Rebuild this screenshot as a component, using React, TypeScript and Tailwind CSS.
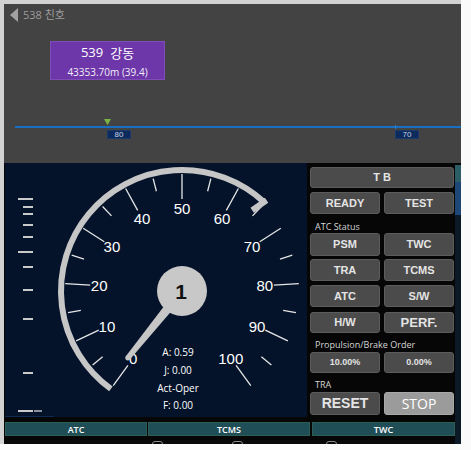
import React from "react";

const CX = 182;
const CY = 291;
const pt = (deg: number, r: number): [number, number] => {
  const a = (deg * Math.PI) / 180;
  return [CX + r * Math.sin(a), CY - r * Math.cos(a)];
};

const Gauge = () => {
  const ticks: React.ReactNode[] = [];
  const labels: React.ReactNode[] = [];
  for (let v = 0; v <= 100; v += 5) {
    const deg = -144 + v * 2.88;
    const major = v % 10 === 0;
    const [x1, y1] = pt(deg, major ? 92 : 103);
    const [x2, y2] = pt(deg, major ? 117 : 116);
    ticks.push(
      <line key={"t" + v} x1={x1} y1={y1} x2={x2} y2={y2} stroke="#e6e6e6" strokeWidth={1.3} />
    );
    if (major) {
      const [lx, ly] = pt(deg, 83);
      labels.push(
        <text
          key={"l" + v}
          x={lx}
          y={ly + 5.5}
          textAnchor="middle"
          fontSize={15}
          fill="#ffffff"
          fontFamily="'Liberation Sans', Arial, sans-serif"
        >
          {v}
        </text>
      );
    }
  }
  const [sx, sy] = pt(-144, 121);
  const [ex, ey] = pt(43, 121);
  const [h1x, h1y] = pt(43, 124);
  const [h2x, h2y] = pt(41, 107);

  const nd = (-141 * Math.PI) / 180;
  const dx = Math.sin(nd);
  const dy = -Math.cos(nd);
  const nx = -dy;
  const ny = dx;
  const L = 86;
  const needle = [
    [CX + nx * 5, CY + ny * 5],
    [CX + dx * L + nx * 2.6, CY + dy * L + ny * 2.6],
    [CX + dx * L - nx * 2.6, CY + dy * L - ny * 2.6],
    [CX - nx * 5, CY - ny * 5],
  ]
    .map((p) => p.join(","))
    .join(" ");

  const scale: [number, boolean][] = [
    [199, true],
    [207, false],
    [214, false],
    [225, false],
    [237, false],
    [252, true],
    [267, false],
    [290, false],
    [319, false],
    [373, false],
    [411, true],
  ];

  return (
    <svg width={302} height={254} viewBox="5 163 302 254" className="block">
      {scale.map(([y, long]) => (
        <line
          key={y}
          x1={long ? 18 : 23}
          x2={33}
          y1={y}
          y2={y}
          stroke="#c9c9c9"
          strokeWidth={2}
        />
      ))}
      <line x1={34} x2={42} y1={411} y2={411} stroke="#8a8f99" strokeWidth={2} />
      <line x1={5} x2={54} y1={416.5} y2={416.5} stroke="#0d2a55" strokeWidth={1} />
      {ticks}
      <path
        d={`M ${sx} ${sy} A 121 121 0 1 1 ${ex} ${ey}`}
        fill="none"
        stroke="#c6c6c6"
        strokeWidth={6}
      />
      <line x1={h1x} y1={h1y} x2={h2x} y2={h2y} stroke="#c6c6c6" strokeWidth={6} />
      {labels}
      <polygon points={needle} fill="#c6c6c6" />
      <circle cx={CX + dx * L} cy={CY + dy * L} r={2.6} fill="#c6c6c6" />
      <circle cx={CX} cy={CY} r={25} fill="#c8c8c8" />
      <text
        x={CX - 1}
        y={CY + 7.5}
        textAnchor="middle"
        fontSize={21}
        fontWeight={700}
        fill="#111"
        fontFamily="'Liberation Sans', Arial, sans-serif"
      >
        1
      </text>
      {[
        ["A: 0.59", 356],
        ["J: 0.00", 374],
        ["Act-Oper", 391.5],
        ["F: 0.00", 409],
      ].map(([t, y]) => (
        <text
          key={t as string}
          x={178}
          y={y as number}
          textAnchor="middle"
          fontSize={10}
          fill="#ffffff"
          fontFamily="'Open Sans', 'Noto Sans', sans-serif"
        >
          {t}
        </text>
      ))}
    </svg>
  );
};

const Btn = ({
  children,
  className = "",
}: {
  children: React.ReactNode;
  className?: string;
}) => (
  <div
    className={
      "flex items-center justify-center rounded-[3px] border border-[#5c5c5c] bg-[#4b4b4b] font-bold text-[#e4e4e4] font-['Liberation_Sans',Arial,sans-serif] " +
      className
    }
  >
    {children}
  </div>
);

const Label = ({ children, className = "" }: { children: React.ReactNode; className?: string }) => (
  <div
    className={
      "flex items-center pl-[5px] text-[9px] leading-none text-[#d6d6d6] font-['Open_Sans','Noto_Sans',sans-serif] " +
      className
    }
  >
    {children}
  </div>
);

export default function App() {
  return (
    <div className="w-[471px] h-[450px] bg-[#fafafa] overflow-hidden">
      <div className="w-[461px] h-[444px] border-l-4 border-t-4 border-[#d2d2d2] flex flex-col">
        {/* top panel */}
        <div className="h-[159px] bg-[#434343] flex flex-col">
          <div className="h-[20px] flex items-center pl-[6px] pt-[1px]">
            <svg width="8" height="14" viewBox="0 0 8 14">
              <polygon points="8,0 8,14 0,7" fill="#a2a2a2" />
            </svg>
            <span className="ml-[5px] text-[11px] leading-none text-[#9c9c9c] font-['Open_Sans','Noto_Sans_CJK_KR',sans-serif]">
              538 친호
            </span>
          </div>
          <div className="ml-[46px] mt-[17px] w-[115px] h-[39px] bg-[#6d37a9] border border-[#7f4cb8] flex flex-col items-center justify-center text-white font-['Open_Sans','Noto_Sans_CJK_KR',sans-serif]">
            <div className="flex gap-[7px] text-[13px] leading-none mt-[1px]">
              <span>539</span>
              <span className="font-['Noto_Sans_CJK_KR',sans-serif]">강동</span>
            </div>
            <div className="text-[10px] leading-none mt-[8px] text-[#f2eef8]">43353.70m (39.4)</div>
          </div>
          <div className="relative ml-[11px] mt-[38px] h-[22px] w-[446px]">
            <div className="absolute left-0 right-0 top-[8px] h-[2px] bg-[#1b6fc1]" />
            <svg className="absolute left-[89px] top-[1px]" width="7" height="6" viewBox="0 0 7 6">
              <polygon points="0,0 7,0 3.5,6" fill="#7cb443" />
            </svg>
            <div className="absolute left-[92px] top-[12px] w-[24px] h-[9px] bg-[#0c2a5c] border border-[#1a3a6a] flex items-center justify-center text-[8px] leading-none text-[#c9d3e6] font-['Liberation_Sans',Arial,sans-serif]">
              80
            </div>
            <div className="absolute left-[380px] top-[7px] w-[1px] h-[4px] bg-[#2a80d0]" />
            <div className="absolute left-[380px] top-[12px] w-[24px] h-[9px] bg-[#0c2a5c] border border-[#1a3a6a] flex items-center justify-center text-[8px] leading-none text-[#c9d3e6] font-['Liberation_Sans',Arial,sans-serif]">
              70
            </div>
          </div>
        </div>

        {/* lower section */}
        <div className="flex flex-1 bg-[#060606]">
          <div className="flex flex-col w-[451px]">
            <div className="flex h-[259px]">
              <div className="ml-[1px] w-[302px] h-[254px] bg-[#04132a]">
                <Gauge />
              </div>
              <div className="ml-[3px] w-[144px] pt-[4px] flex flex-col">
                <Btn className="h-[21px] text-[11px]">T B</Btn>
                <div className="grid grid-cols-2 gap-[4px] mt-[4px]">
                  <Btn className="h-[22px] text-[11px]">READY</Btn>
                  <Btn className="h-[22px] text-[11px]">TEST</Btn>
                </div>
                <Label className="h-[19px] pt-[5px]">ATC Status</Label>
                <div className="grid grid-cols-2 gap-x-[4px] gap-y-[3px]">
                  <Btn className="h-[23px] text-[11px]">PSM</Btn>
                  <Btn className="h-[23px] text-[11px]">TWC</Btn>
                  <Btn className="h-[22px] text-[11px]">TRA</Btn>
                  <Btn className="h-[22px] text-[11px]">TCMS</Btn>
                  <Btn className="h-[22px] text-[11px] mt-[1px]">ATC</Btn>
                  <Btn className="h-[22px] text-[11px] mt-[1px]">S/W</Btn>
                  <Btn className="h-[21px] text-[11px] mt-[2px]">H/W</Btn>
                  <Btn className="h-[21px] text-[13px] mt-[2px]">PERF.</Btn>
                </div>
                <Label className="h-[19px] pt-[3px]">Propulsion/Brake Order</Label>
                <div className="grid grid-cols-2 gap-[4px]">
                  <Btn className="h-[21px] text-[9px]">10.00%</Btn>
                  <Btn className="h-[21px] text-[9px]">0.00%</Btn>
                </div>
                <Label className="h-[19px] pt-[3px]">TRA</Label>
                <div className="grid grid-cols-2 gap-[4px]">
                  <Btn className="h-[23px] text-[14px]">RESET</Btn>
                  <div className="h-[23px] flex items-center justify-center rounded-[3px] border border-[#a8a8a8] bg-[#9b9b9b] text-[14px] text-white font-['Open_Sans','Noto_Sans',sans-serif]">
                    STOP
                  </div>
                </div>
              </div>
            </div>
            <div className="flex h-[14px] ml-[1px] text-[9px] text-white font-semibold font-['Open_Sans','Noto_Sans',sans-serif] leading-none">
              <div className="w-[142px] bg-[#1f4e57] border border-[#2b5e55] flex items-center justify-center">ATC</div>
              <div className="ml-[1px] w-[162px] bg-[#1f4e57] border border-[#2b5e55] flex items-center justify-center">TCMS</div>
              <div className="ml-[2px] w-[143px] bg-[#1f4e57] border border-[#2b5e55] flex items-center justify-center">TWC</div>
            </div>
            <div className="flex h-[8px] overflow-hidden pt-[5px]">
              <div className="ml-[148px] w-[11px] h-[10px] rounded-[3px] border border-[#8a8a8a]" />
              <div className="ml-[69px] w-[11px] h-[10px] rounded-[3px] border border-[#8a8a8a]" />
              <div className="ml-[83px] w-[11px] h-[10px] rounded-[3px] border border-[#8a8a8a]" />
            </div>
          </div>
          <div className="w-[6px] flex flex-col">
            <div className="h-[2px]" />
            <div className="h-[17px] bg-[#2c5e68]" />
            <div className="h-[33px] bg-[#1d4776]" />
            <div className="flex-1 bg-[#0b1826]" />
          </div>
        </div>
      </div>
    </div>
  );
}
